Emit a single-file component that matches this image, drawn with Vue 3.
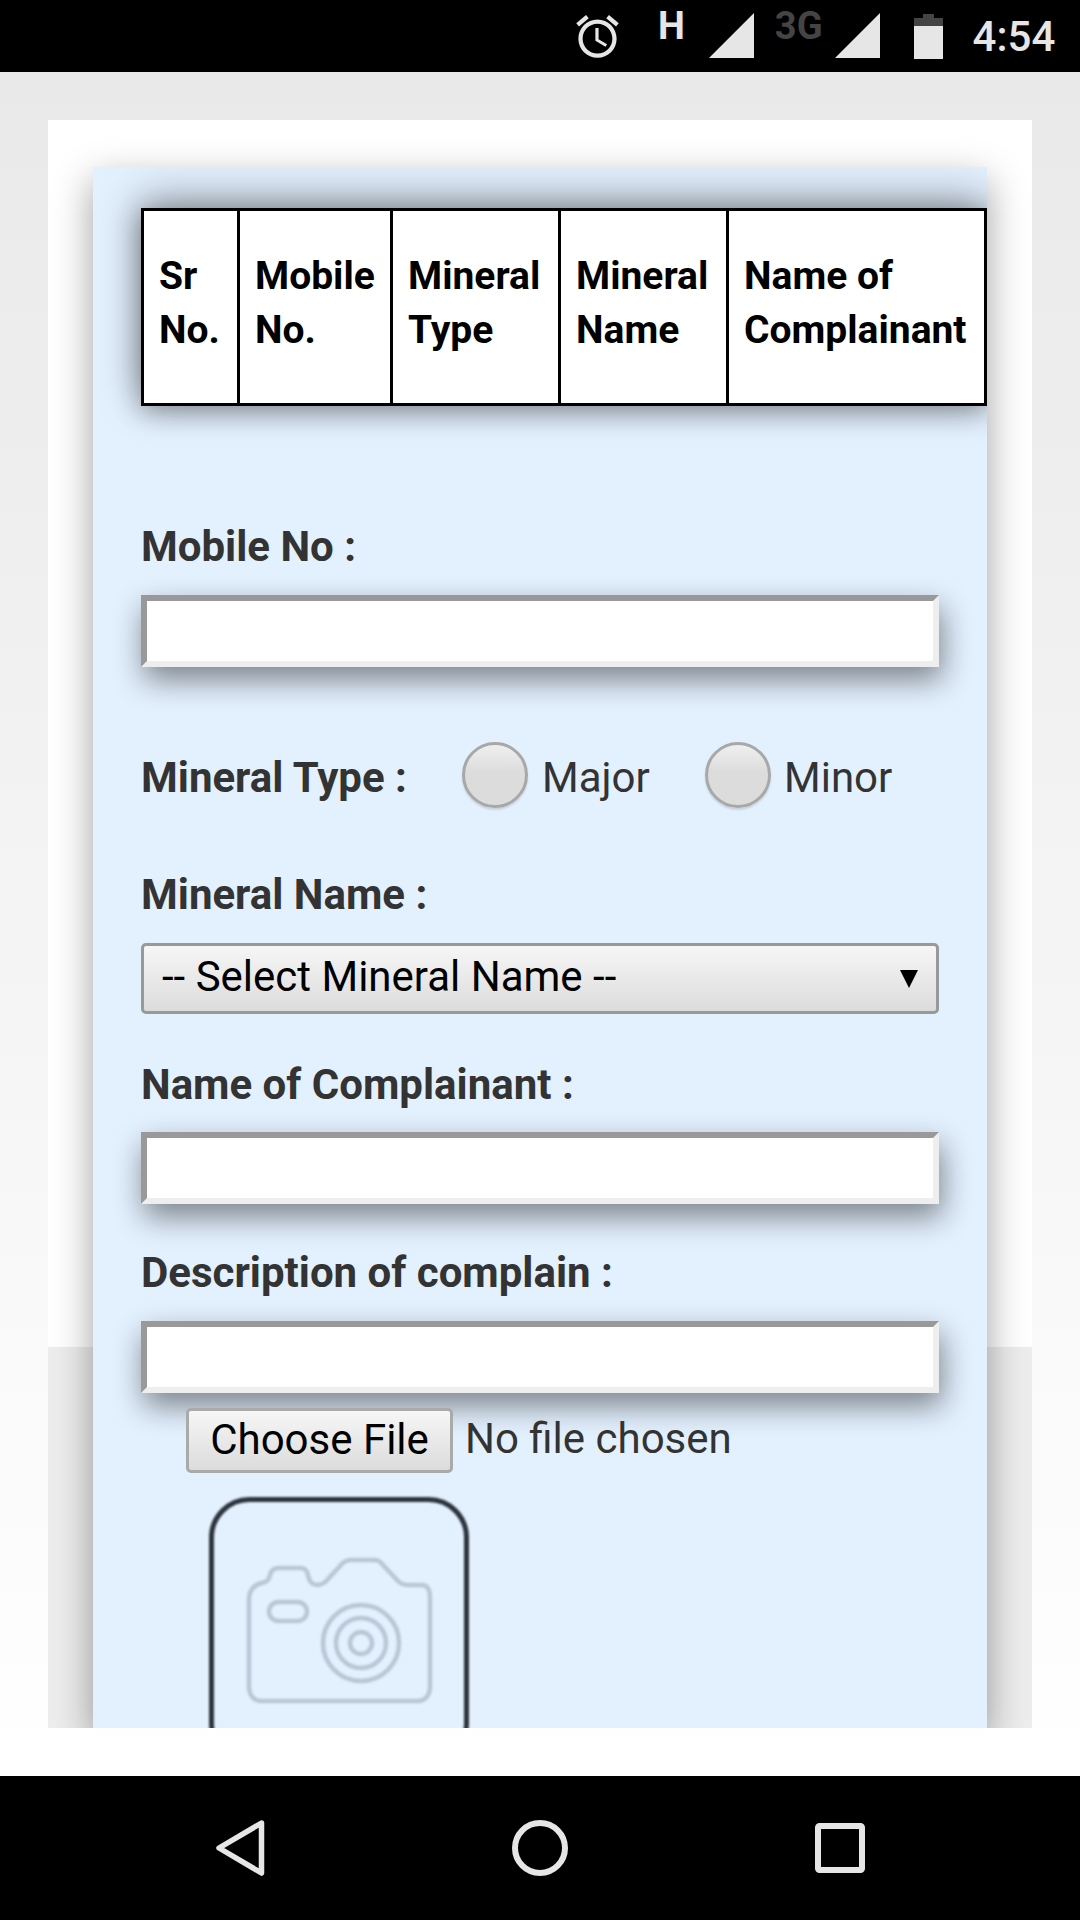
<script setup>
const headers = [
  ['Sr', 'No.'],
  ['Mobile', 'No.'],
  ['Mineral', 'Type'],
  ['Mineral', 'Name'],
  ['Name of', 'Complainant']
]
</script>

<template>
  <div class="screen">
    <header class="status">
      <svg class="alarm" viewBox="0 0 24 24" fill="#e6e6e6"><path d="M22 5.72l-4.6-3.86-1.29 1.53 4.6 3.86L22 5.72zM7.88 3.39L6.6 1.86 2 5.71l1.29 1.53 4.59-3.85zM12.5 8H11v6l4.75 2.85.75-1.23-4-2.37V8zM12 4c-4.97 0-9 4.03-9 9s4.02 9 9 9c4.97 0 9-4.03 9-9s-4.03-9-9-9zm0 16c-3.87 0-7-3.13-7-7s3.13-7 7-7 7 3.13 7 7-3.13 7-7 7z"/></svg>
      <span class="net net-h">H</span>
      <svg class="signal signal-a" viewBox="0 0 45 45"><path d="M0 45 45 0v45z" fill="#e6e6e6"/></svg>
      <span class="net net-3g">3G</span>
      <svg class="signal signal-b" viewBox="0 0 45 45"><path d="M0 45 45 0v45z" fill="#e6e6e6"/></svg>
      <svg class="battery" viewBox="0 0 29 45"><path d="M0 12V4h9V0h11v4h9v8z" fill="#444"/><path d="M0 12h29v33H0z" fill="#e6e6e6"/></svg>
      <span class="time">4:54</span>
    </header>

    <main class="page">
      <div class="wrapper">
        <section class="panel">
          <table class="grid">
            <colgroup>
              <col class="c1" /><col class="c2" /><col class="c3" /><col class="c4" /><col class="c5" />
            </colgroup>
            <thead>
              <tr>
                <th v-for="(h, i) in headers" :key="i">{{ h[0] }}<br />{{ h[1] }}</th>
              </tr>
            </thead>
          </table>

          <label class="label first">Mobile No :</label>
          <input class="field" type="text" />

          <div class="radios">
            <span class="label radio-title">Mineral Type :</span>
            <span class="radio"></span>
            <span class="radio-text">Major</span>
            <span class="radio radio-second"></span>
            <span class="radio-text radio-text-last">Minor</span>
          </div>

          <label class="label l-mineral">Mineral Name :</label>
          <div class="select">
            <span class="select-text">-- Select Mineral Name --</span>
            <i class="arrow"></i>
          </div>

          <label class="label l-name">Name of Complainant :</label>
          <input class="field f-tight" type="text" />

          <label class="label l-desc">Description of complain :</label>
          <input class="field" type="text" />

          <div class="file">
            <button class="file-btn" type="button">Choose File</button>
            <span class="file-text">No file chosen</span>
          </div>

          <svg class="photo" viewBox="0 0 270 270" fill="none">
            <rect x="2.500" y="2.500" width="255" height="262" rx="38" stroke="#2b323b" stroke-width="5"/>
            <g stroke="#b9c6d4" stroke-width="4.500" stroke-linejoin="round">
              <path d="M40 102c0-9 6-15 13-16 5-1 7-3 8-8 1-5 4-7 9-7h21c5 0 7 2 8 7 1 6 4 10 9 10 5 0 8-2 11-6l12-13c3-4 6-6 11-6h22c5 0 7 1 10 5l15 16c3 3 6 4 10 4h14c6 0 8 6 8 12v90c0 8-5 14-12 14H52c-7 0-12-6-12-14z"/>
              <rect x="60" y="105" width="38" height="19" rx="9.500"/>
              <circle cx="152" cy="146" r="38"/>
              <circle cx="152" cy="146" r="25"/>
              <circle cx="152" cy="146" r="11"/>
            </g>
          </svg>
        </section>
      </div>
    </main>

    <footer class="nav">
      <svg class="nav-back" viewBox="0 0 49 56" fill="none"><path d="M45.500 3 3 28l42.500 25z" stroke="#e6e6e6" stroke-width="5.500" stroke-linejoin="round"/></svg>
      <svg class="nav-home" viewBox="0 0 56 56" fill="none"><circle cx="28" cy="28" r="25" stroke="#e6e6e6" stroke-width="6"/></svg>
      <svg class="nav-recent" viewBox="0 0 50 50" fill="none"><rect x="3" y="3" width="44" height="44" rx="1.500" stroke="#e6e6e6" stroke-width="6"/></svg>
    </footer>
  </div>
</template>

<style scoped>
.screen {
  width: 1080px;
  height: 1920px;
  display: flex;
  flex-direction: column;
  overflow: hidden;
  font-family: Roboto, "Liberation Sans", sans-serif;
}

/* status bar */
.status {
  height: 72px;
  flex: none;
  background: #000;
  display: flex;
  align-items: flex-start;
  padding-left: 572px;
  box-sizing: border-box;
  color: #e6e6e6;
}
.alarm { width: 51px; height: 51px; margin-top: 11px; flex: none; }
.net { font-weight: 700; font-size: 38px; line-height: 38px; margin-top: 7px; flex: none; }
.net-h { margin-left: 35px; }
.signal { width: 45px; height: 45px; margin-top: 13px; flex: none; }
.signal-a { margin-left: 24px; }
.net-3g { color: #444; margin-left: 21px; }
.signal-b { margin-left: 12px; }
.battery { width: 29px; height: 45px; margin-top: 14px; margin-left: 34px; flex: none; }
.time { font-size: 42px; font-weight: 500; line-height: 48px; margin-top: 13px; margin-left: 30px; }

/* page */
.page {
  flex: 1;
  min-height: 0;
  box-sizing: border-box;
  padding: 48px 48px 48px;
  background: linear-gradient(#e9e9e9, #fff);
}
.wrapper {
  height: 100%;
  overflow: hidden;
  padding: 47px 45px 0;
  box-sizing: border-box;
  background: linear-gradient(#fff 1227px, #ededed 1227px);
}
.panel {
  height: 100%;
  box-sizing: border-box;
  overflow: hidden;
  padding: 41px 0 0 48px;
  background: #e3f0fe;
  box-shadow: 0 14px 36px rgba(0, 0, 0, 0.38);
}

/* table */
.grid {
  width: 846px;
  height: 198px;
  table-layout: fixed;
  border-collapse: separate;
  border-spacing: 0;
  background: #fff;
  border: 3px solid #000;
  box-sizing: border-box;
  box-shadow: 0 -8px 40px rgba(0, 0, 0, 0.38), 0 6px 24px rgba(0, 0, 0, 0.3);
}
.c1 { width: 93px; }
.c2 { width: 153px; }
.c3 { width: 168px; }
.c4 { width: 168px; }
.grid th {
  padding: 0 0 8px 15px;
  font-size: 39px;
  line-height: 54px;
  font-weight: 700;
  color: #000;
  text-align: left;
  vertical-align: middle;
  white-space: nowrap;
  border-left: 3px solid #000;
}
.grid th:first-child { border-left: 0; }

/* form */
.label {
  display: block;
  font-size: 42px;
  line-height: 54px;
  font-weight: 700;
  color: #333;
}
.first { margin-top: 114px; }
.l-mineral { margin-top: 60px; }
.l-name { margin-top: 44px; }
.l-desc { margin-top: 42px; }

.field {
  display: block;
  width: 798px;
  height: 72px;
  margin-top: 21px;
  box-sizing: border-box;
  background: #fff;
  border-style: solid;
  border-width: 6px;
  border-color: #999 #eee #eee #999;
  outline: none;
  padding: 0;
  border-radius: 0;
  box-shadow: 3px 13px 30px rgba(0, 0, 0, 0.45);
}
.f-tight { margin-top: 20px; }

.radios {
  display: flex;
  align-items: center;
  height: 66px;
  margin-top: 75px;
}
.radio-title { width: 321px; flex: none; margin-top: 6px; }
.radio {
  width: 66px;
  height: 66px;
  flex: none;
  box-sizing: border-box;
  border: 3px solid #a8a8a8;
  border-radius: 50%;
  background: linear-gradient(#efefef, #dcdcdc 45%);
  box-shadow: 0 2px 2px rgba(0, 0, 0, 0.12);
}
.radio-second { margin-left: 56px; }
.radio-text {
  margin-left: 14px;
  margin-top: 6px;
  font-size: 42px;
  line-height: 54px;
  color: #333;
  width: 107px;
}
.radio-text-last { margin-left: 13px; }

.select {
  width: 798px;
  height: 71px;
  margin-top: 21px;
  box-sizing: border-box;
  border: 3px solid #999;
  border-radius: 5px;
  background: linear-gradient(#f6f6f6, #dcdcdc);
  display: flex;
  align-items: center;
  justify-content: space-between;
  padding: 0 18px;
  font-size: 42px;
  color: #000;
}
.select-text { margin-bottom: 4px; }
.arrow {
  width: 0;
  height: 0;
  border-left: 9px solid transparent;
  border-right: 9px solid transparent;
  border-top: 18px solid #000;
}

.file {
  display: flex;
  align-items: center;
  margin-top: 15px;
  margin-left: 45px;
}
.file-btn {
  width: 267px;
  height: 65px;
  box-sizing: border-box;
  padding: 0 0 3px;
  border: 3px solid #aaa;
  border-radius: 5px;
  background: linear-gradient(#f6f6f6, #dcdcdc);
  font-family: inherit;
  font-size: 42px;
  color: #000;
}
.file-text {
  margin-left: 12px;
  margin-bottom: 4px;
  font-size: 42px;
  color: #333;
}

.photo {
  display: block;
  width: 270px;
  height: 270px;
  margin-top: 24px;
  margin-left: 68px;
  filter: blur(0.8px);
}

/* nav */
.nav {
  height: 144px;
  flex: none;
  background: #000;
  display: flex;
  align-items: center;
  padding-left: 216px;
  box-sizing: border-box;
}
.nav-back { width: 49px; height: 56px; flex: none; }
.nav-home { width: 56px; height: 56px; margin-left: 247px; flex: none; }
.nav-recent { width: 50px; height: 50px; margin-left: 247px; flex: none; }
</style>
